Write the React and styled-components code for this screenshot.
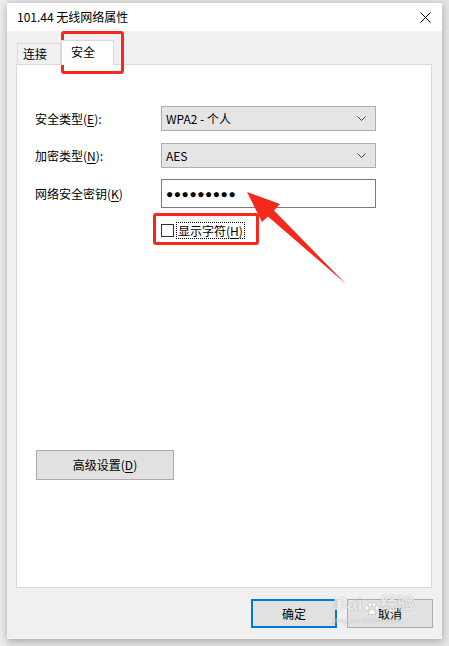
import React from "react";
import styled, { createGlobalStyle } from "styled-components";

const Global = createGlobalStyle`
  html, body { margin: 0; padding: 0; }
  body {
    background: #e6e6e6;
    font-family: "Noto Sans CJK SC", "Noto Sans", sans-serif;
    font-size: 12px;
    color: #000;
    overflow: hidden;
  }
`;

const Page = styled.div`
  position: relative;
  width: 449px;
  height: 646px;
  padding: 3px 7px 0 7px;
  box-sizing: border-box;
  background: linear-gradient(to right, #ececec 0 7px, transparent 7px), #e4e4e4;
`;

const Dialog = styled.div`
  width: 435px;
  height: 636px;
  display: flex;
  flex-direction: column;
  background: #f0f0f0;
  box-shadow: 0 2px 8px rgba(0, 0, 0, 0.28);
`;

const TitleBar = styled.div`
  height: 28px;
  background: #fff;
  display: flex;
  align-items: center;
  justify-content: space-between;
  padding: 0 11px 0 10px;
`;

const Title = styled.span`
  font-size: 12px;
  line-height: 16px;
  color: #000;
`;

const Body = styled.div`
  flex: 1;
  display: flex;
  flex-direction: column;
  padding: 9px 10px 11px 9px;
`;

const TabStrip = styled.div`
  display: flex;
  align-items: flex-end;
  height: 24px;
  padding-left: 1px;
`;

const Tab = styled.div`
  box-sizing: border-box;
  width: ${(p) => (p.$active ? 53 : 44)}px;
  height: ${(p) => (p.$active ? 25 : 21)}px;
  border: 1px solid #d9d9d9;
  border-bottom: none;
  background: ${(p) => (p.$active ? "#fff" : "#f0f0f0")};
  margin-bottom: ${(p) => (p.$active ? "-1px" : "0")};
  position: relative;
  z-index: ${(p) => (p.$active ? 1 : 0)};
  padding: ${(p) => (p.$active ? "3px 0 0 9px" : "2px 0 0 5px")};
  line-height: 16px;
  font-size: 12px;
`;

const Panel = styled.div`
  flex: 1;
  background: #fff;
  border: 1px solid #d9d9d9;
  padding: 41px 0 0 18px;
  display: flex;
  flex-direction: column;
`;

const Form = styled.div`
  display: grid;
  grid-template-columns: 126px 215px;
  row-gap: 12px;
  align-items: center;
`;

const Label = styled.span`
  font-size: 12px;
  line-height: 16px;
  u { text-decoration: underline; text-underline-offset: 2px; }
`;

const Combo = styled.div`
  box-sizing: border-box;
  height: 25px;
  background: #e5e5e5;
  border: 1px solid #adadad;
  display: flex;
  align-items: center;
  justify-content: space-between;
  padding: 0 9px 0 4px;
  font-size: 12px;
  line-height: 16px;
`;

const Input = styled.div`
  box-sizing: border-box;
  height: 29px;
  margin-top: -1px;
  background: #fff;
  border: 1px solid #7a7a7a;
  display: flex;
  align-items: center;
  padding: 0 4px;
`;

const Dots = styled.span`
  font-family: "Liberation Sans", "DejaVu Sans", sans-serif;
  font-size: 12px;
  letter-spacing: 0.55px;
  line-height: 14px;
  color: #000;
`;

const CheckRow = styled.div`
  display: flex;
  align-items: center;
  margin: 14px 0 0 126px;
  height: 17px;
`;

const Box = styled.span`
  box-sizing: border-box;
  width: 13px;
  height: 13px;
  border: 1px solid #333;
  background: #fff;
`;

const CheckLabel = styled.span`
  margin-left: 2px;
  border: 1px dotted #000;
  padding: 0 1px 0 1px;
  line-height: 15px;
  font-size: 12px;
  u { text-decoration: underline; text-underline-offset: 2px; }
`;

const Button = styled.div`
  box-sizing: border-box;
  width: ${(p) => p.$w}px;
  height: ${(p) => p.$h}px;
  background: #e1e1e1;
  border: ${(p) => (p.$primary ? "2px solid #0078d7" : "1px solid #adadad")};
  display: flex;
  align-items: center;
  justify-content: center;
  font-size: 12px;
  line-height: 16px;
  u { text-decoration: underline; text-underline-offset: 2px; }
`;

const AdvancedWrap = styled.div`
  margin-top: 211px;
  margin-left: 1px;
`;

const ButtonRow = styled.div`
  display: flex;
  justify-content: flex-end;
  gap: 10px;
  margin-top: 11px;
  margin-right: -1px;
`;

const Highlight = styled.div`
  position: absolute;
  box-sizing: border-box;
  left: ${(p) => p.$x}px;
  top: ${(p) => p.$y}px;
  width: ${(p) => p.$w}px;
  height: ${(p) => p.$h}px;
  border: 3px solid #f5281c;
  border-radius: 3px;
  pointer-events: none;
`;

const Overlay = styled.svg`
  position: absolute;
  left: 0;
  top: 0;
  pointer-events: none;
`;

const Watermark = styled.div`
  position: absolute;
  left: 333px;
  top: 592px;
  width: 92px;
  color: rgba(255, 255, 255, 0.8);
  text-shadow: 0 0 1px rgba(0, 0, 0, 0.35);
  font-family: "Liberation Sans", "Noto Sans CJK SC", sans-serif;
  pointer-events: none;
`;

const WmMain = styled.div`
  font-size: 19px;
  font-weight: bold;
  line-height: 24px;
  display: flex;
  align-items: flex-end;
  gap: 1px;
`;

const WmSub = styled.div`
  font-size: 8px;
  line-height: 10px;
  letter-spacing: 0.3px;
`;

const Chevron = () => (
  <svg width="9" height="5" viewBox="0 0 9 5">
    <path d="M0.5 0.5 L4.5 4.5 L8.5 0.5" fill="none" stroke="#444" strokeWidth="1" />
  </svg>
);

const CloseIcon = () => (
  <svg width="11" height="11" viewBox="0 0 11 11">
    <path d="M0.5 0.5 L10.5 10.5 M10.5 0.5 L0.5 10.5" stroke="#000" strokeWidth="1" />
  </svg>
);

const Paw = () => (
  <svg width="16" height="14" viewBox="0 0 16 14">
    <g fill="rgba(255,255,255,0.85)" stroke="rgba(0,0,0,0.2)" strokeWidth="0.6">
      <ellipse cx="3" cy="6" rx="2" ry="2.4" />
      <ellipse cx="6" cy="2.6" rx="1.9" ry="2.3" />
      <ellipse cx="10" cy="2.6" rx="1.9" ry="2.3" />
      <ellipse cx="13" cy="6" rx="2" ry="2.4" />
      <path d="M4.5 12.5 C4.5 9 6.5 7.5 8 7.5 C9.5 7.5 11.5 9 11.5 12.5 Z" />
    </g>
  </svg>
);

export default function App() {
  return (
    <>
      <Global />
      <Page>
        <Dialog>
          <TitleBar>
            <Title>101.44 无线网络属性</Title>
            <CloseIcon />
          </TitleBar>
          <Body>
            <TabStrip>
              <Tab>连接</Tab>
              <Tab $active>安全</Tab>
            </TabStrip>
            <Panel>
              <Form>
                <Label>安全类型(<u>E</u>):</Label>
                <Combo>
                  <span>WPA2 - 个人</span>
                  <Chevron />
                </Combo>
                <Label>加密类型(<u>N</u>):</Label>
                <Combo>
                  <span>AES</span>
                  <Chevron />
                </Combo>
                <Label>网络安全密钥(<u>K</u>)</Label>
                <Input>
                  <Dots>●●●●●●●●●</Dots>
                </Input>
              </Form>
              <CheckRow>
                <Box />
                <CheckLabel>显示字符(<u>H</u>)</CheckLabel>
              </CheckRow>
              <AdvancedWrap>
                <Button $w={138} $h={30}>高级设置(<u>D</u>)</Button>
              </AdvancedWrap>
            </Panel>
            <ButtonRow>
              <Button $w={86} $h={29} $primary>确定</Button>
              <Button $w={86} $h={29}>取消</Button>
            </ButtonRow>
          </Body>
        </Dialog>

        <Highlight $x={61} $y={31} $w={63} $h={43} />
        <Highlight $x={153} $y={213} $w={106} $h={32} />

        <Overlay width="449" height="646" viewBox="0 0 449 646">
          <polygon
            points="247,192 280,204 274,210.5 346,284 268,216.5 262,222"
            fill="#f5281c"
          />
        </Overlay>

        <Watermark>
          <WmMain>
            <span>Bai</span>
            <Paw />
            <span style={{ fontSize: 17 }}>经验</span>
          </WmMain>
          <WmSub>jingyan.baidu.com</WmSub>
        </Watermark>
      </Page>
    </>
  );
}
